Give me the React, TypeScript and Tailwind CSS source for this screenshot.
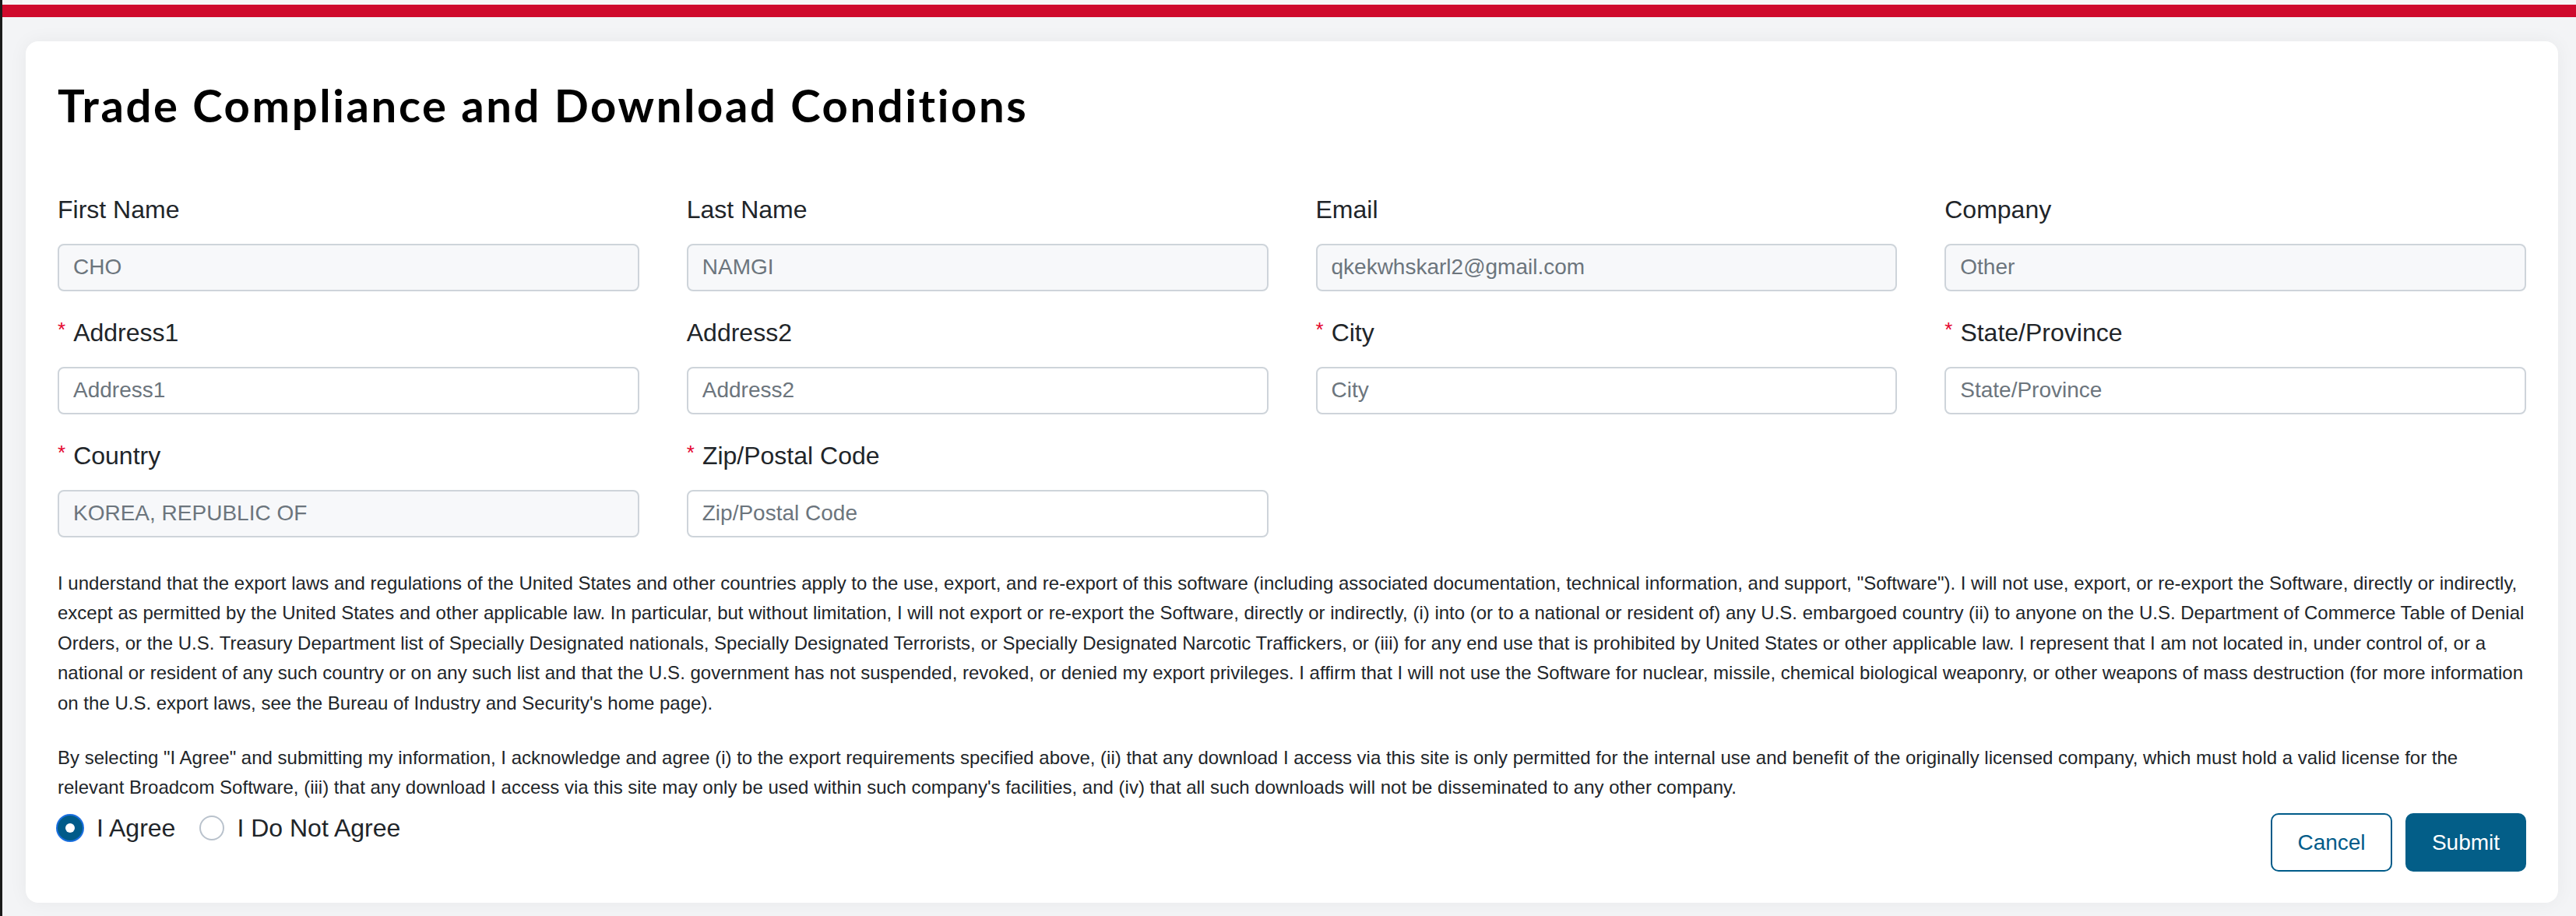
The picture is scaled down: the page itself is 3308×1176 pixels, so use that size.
type Field = {
  label: string;
  value?: string;
  placeholder?: string;
  required?: boolean;
  locked?: boolean;
};

const fields: Field[] = [
  { label: "First Name", value: "CHO", locked: true },
  { label: "Last Name", value: "NAMGI", locked: true },
  { label: "Email", value: "qkekwhskarl2@gmail.com", locked: true },
  { label: "Company", value: "Other", locked: true },
  { label: "Address1", placeholder: "Address1", required: true },
  { label: "Address2", placeholder: "Address2" },
  { label: "City", placeholder: "City", required: true },
  { label: "State/Province", placeholder: "State/Province", required: true },
  { label: "Country", value: "KOREA, REPUBLIC OF", required: true, locked: true },
  { label: "Zip/Postal Code", placeholder: "Zip/Postal Code", required: true },
];

function FormField({ f }: { f: Field }) {
  return (
    <div className="flex flex-col">
      <label className="text-[32px] leading-[48px] text-[#212529] mb-[20px] flex items-start">
        {f.required && <span className="text-[#e4002b] text-[26px] leading-[40px] mr-[10px]">*</span>}
        {f.label}
      </label>
      <input
        readOnly={f.locked}
        defaultValue={f.value}
        placeholder={f.placeholder}
        className={
          "h-[61px] w-full rounded-[8px] border-2 border-[#ced4da] px-[18px] text-[28px] text-[#6c757d] placeholder:text-[#6c757d] outline-none " +
          (f.locked ? "bg-[#f7f8fa]" : "bg-white")
        }
      />
    </div>
  );
}

export default function App() {
  return (
    <div className="h-[1176px] overflow-hidden bg-[#f3f4f6] border-l-[3px] border-[#1b1b1b] font-['Liberation_Sans',Arial,sans-serif]">
      <div className="h-[6px] bg-[#f6f6f6]" />
      <div className="h-[16px] bg-[#cf0a2c]" />
      <div className="pt-[31px] pl-[30px] pr-[23px]">
        <div className="bg-white rounded-[16px] shadow-[0_0_24px_rgba(0,0,0,0.05)] px-[41px] pt-[47px] pb-[40px]">
          <h1 className="font-['Lato',sans-serif] font-bold text-[58px] leading-[1.2] tracking-[2.6px] text-black mb-[75px]">
            Trade Compliance and Download Conditions
          </h1>

          <div className="grid grid-cols-4 gap-x-[61px] gap-y-[29px]">
            {fields.map((f) => (
              <FormField key={f.label} f={f} />
            ))}
          </div>

          <p className="mt-[40px] text-[24px] leading-[38.5px] text-[#212529]">
            I understand that the export laws and regulations of the United States and other countries apply to the use, export, and re-export of this software (including associated documentation, technical information, and support, "Software"). I will not use, export, or re-export the Software, directly or indirectly, except as permitted by the United States and other applicable law. In particular, but without limitation, I will not export or re-export the Software, directly or indirectly, (i) into (or to a national or resident of) any U.S. embargoed country (ii) to anyone on the U.S. Department of Commerce Table of Denial Orders, or the U.S. Treasury Department list of Specially Designated nationals, Specially Designated Terrorists, or Specially Designated Narcotic Traffickers, or (iii) for any end use that is prohibited by United States or other applicable law. I represent that I am not located in, under control of, or a national or resident of any such country or on any such list and that the U.S. government has not suspended, revoked, or denied my export privileges. I affirm that I will not use the Software for nuclear, missile, chemical biological weaponry, or other weapons of mass destruction (for more information on the U.S. export laws, see the Bureau of Industry and Security's home page).
          </p>

          <p className="mt-[32px] text-[24px] leading-[38px] text-[#212529]">
            By selecting "I Agree" and submitting my information, I acknowledge and agree (i) to the export requirements specified above, (ii) that any download I access via this site is only permitted for the internal use and benefit of the originally licensed company, which must hold a valid license for the relevant Broadcom Software, (iii) that any download I access via this site may only be used within such company's facilities, and (iv) that all such downloads will not be disseminated to any other company.
          </p>

          <div className="mt-[9px] flex items-start justify-between">
            <div className="flex items-center text-[32px] leading-[48px] text-[#212529]">
              <span className="flex h-[32px] w-[32px] items-center justify-center rounded-full bg-[#005b89] ring-2 ring-[#1a6fe0]">
                <span className="h-[12px] w-[12px] rounded-full bg-white" />
              </span>
              <span className="ml-[18px]">I Agree</span>
              <span className="ml-[31px] h-[32px] w-[32px] rounded-full border-2 border-[#b9c2cc] bg-white" />
              <span className="ml-[16px]">I Do Not Agree</span>
            </div>
            <div className="mt-[5px] flex gap-[17px]">
              <button className="h-[75px] w-[156px] rounded-[10px] border-2 border-[#005b89] bg-white text-[28px] text-[#005b89]">
                Cancel
              </button>
              <button className="h-[75px] w-[155px] rounded-[10px] bg-[#035e88] text-[28px] text-white">
                Submit
              </button>
            </div>
          </div>
        </div>
      </div>
    </div>
  );
}
